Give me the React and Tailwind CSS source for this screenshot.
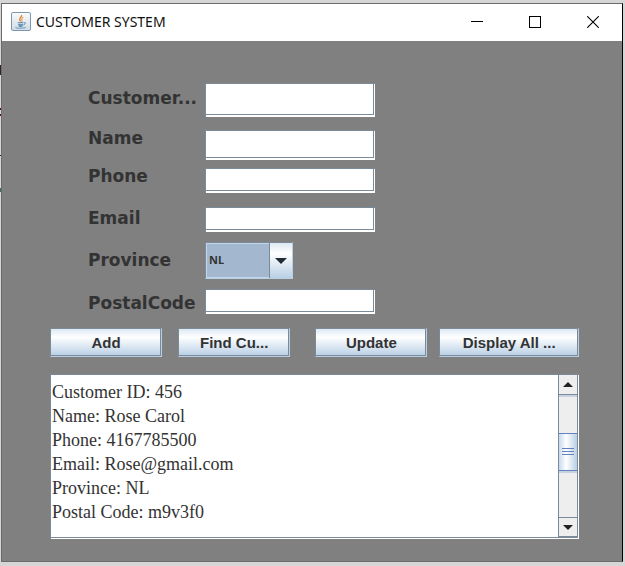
import { useState } from "react";

const LABELS = [
  { id: "customerId", text: "Customer...", space: "" },
  { id: "name", text: "Name", space: "mt-4" },
  { id: "phone", text: "Phone", space: "mt-3.5" },
  { id: "email", text: "Email", space: "mt-4.5" },
  { id: "province", text: "Province", space: "mt-4.5" },
  { id: "postalCode", text: "PostalCode", space: "mt-[19px]" },
];

const ACTIONS = [
  { text: "Add", size: "flex-4" },
  { text: "Find Cu...", size: "flex-4 ml-4" },
  { text: "Update", size: "flex-4 ml-[25px]" },
  { text: "Display All ...", size: "flex-5 ml-3" },
];

const RECORD = [
  "Customer ID: 456",
  "Name: Rose Carol",
  "Phone: 4167785500",
  "Email: Rose@gmail.com",
  "Province: NL",
  "Postal Code: m9v3f0",
].join("\n");

function JavaIcon() {
  return (
    <svg width="20" height="20" viewBox="0 0 20 20" aria-hidden="true">
      <defs>
        <linearGradient id="tile" x1="0" y1="0" x2="0" y2="1">
          <stop offset="0" stopColor="#fbfcfd" />
          <stop offset="1" stopColor="#cfdbe6" />
        </linearGradient>
      </defs>
      <rect x="0.5" y="0.5" width="19" height="18" rx="1.5" fill="url(#tile)" stroke="#7f97ae" />
      <path d="M10.5 3C11.5 4.7 8 5.6 8.8 7.8C9.1 8.6 9.6 9 9.6 9.6" fill="none" stroke="#e58a2c" strokeWidth="1.4" />
      <path d="M12.3 5.2C10.6 6.2 10.1 7 11 8.2C11.4 8.9 11 9.3 10.6 9.8" fill="none" stroke="#eda55c" strokeWidth="1.1" />
      <path d="M6.8 10.7H12.3M7.2 12.4Q9.5 13.4 11.9 12.4M7.7 14Q9.5 14.8 11.6 14" fill="none" stroke="#4d7fa8" strokeWidth="1.1" />
      <path d="M12.8 10.6Q15 10.4 14.2 11.8Q13.7 12.6 12.4 13" fill="none" stroke="#4d7fa8" strokeWidth="0.9" />
      <path d="M5 15Q3.8 16.2 9.5 16.2Q14.5 16.2 15 15" fill="none" stroke="#5f8db2" strokeWidth="0.9" />
    </svg>
  );
}

function TitleBar() {
  const control = "flex h-full w-[58px] items-center justify-center";
  return (
    <header className="flex h-[37px] items-center bg-white pb-px pl-[9px]">
      <JavaIcon />
      <h1 className="ml-[5px] flex-1 font-['Noto_Sans',sans-serif] text-sm leading-5 text-[#111]">
        CUSTOMER SYSTEM
      </h1>
      <button type="button" aria-label="Minimize" className={control}>
        <svg width="12" height="12" viewBox="0 0 12 12" stroke="#000">
          <path d="M0 5.5H12" />
        </svg>
      </button>
      <button type="button" aria-label="Maximize" className={control}>
        <svg width="12" height="12" viewBox="0 0 12 12" fill="none" stroke="#000">
          <rect x="0.5" y="0.5" width="11" height="11" />
        </svg>
      </button>
      <button type="button" aria-label="Close" className={control}>
        <svg width="12" height="12" viewBox="0 0 12 12" stroke="#000" strokeWidth="1.1">
          <path d="M0.2 0.2L11.8 11.8M11.8 0.2L0.2 11.8" />
        </svg>
      </button>
    </header>
  );
}

function Field({ id, className }) {
  return (
    <div className={`border-t border-l border-[#7a8a99] bg-white pr-px pb-0.5 ${className}`}>
      <input
        id={id}
        type="text"
        className="block h-full w-full border-r border-b border-[#7a8a99] bg-white px-1 font-['Liberation_Sans',sans-serif] text-sm text-[#333] outline-none"
      />
    </div>
  );
}

function ProvinceSelect() {
  return (
    <div className="relative mt-2.5 h-[37px] w-[88px] border border-[#7a8a99] border-r-[#b8cfe5] border-b-[#b8cfe5] bg-[#a3b8cf]">
      <select
        id="province"
        defaultValue="NL"
        className="block h-full w-full appearance-none border border-[#c3d5e8] pl-0.5 font-['Noto_Sans',sans-serif] text-[11px] font-bold text-[#333] outline-none"
      >
        <option>NL</option>
        <option>ON</option>
        <option>QC</option>
      </select>
      <span className="pointer-events-none absolute inset-y-0 right-0 flex w-[23px] items-center justify-center border-l border-[#7a8a99] bg-linear-to-b from-[#dde8f3] via-white via-30% to-[#b8cfe5]">
        <svg width="12" height="6" viewBox="0 0 12 6" fill="#222c36">
          <path d="M0 0H12L6 6Z" />
        </svg>
      </span>
    </div>
  );
}

function ScrollBar() {
  const arrow = "flex h-5 items-center justify-center bg-[#eeeeee]";
  return (
    <div className="flex w-5 flex-col border-r border-l border-[#7a8a99] bg-[#eeeeee]">
      <button type="button" aria-label="Scroll up" className={`${arrow} border-b border-[#7a8a99]`}>
        <svg width="10" height="5" viewBox="0 0 10 5" fill="#222">
          <path d="M5 0L10 5H0Z" />
        </svg>
      </button>
      <div className="flex-20 border-t-2 border-[#c6d2de]" />
      <div className="flex h-[38px] flex-col items-center justify-center gap-0.5 border-y border-[#6382bf] bg-linear-to-r from-[#c8d9ee] via-white via-40% to-[#b8cfe5]">
        <span className="h-px w-3 bg-[#6382bf]" />
        <span className="h-px w-3 bg-[#6382bf]" />
        <span className="h-px w-3 bg-[#6382bf]" />
      </div>
      <div className="flex-25 border-t-2 border-[#c6d2de]" />
      <button type="button" aria-label="Scroll down" className={`${arrow} border-y border-[#7a8a99]`}>
        <svg width="10" height="5" viewBox="0 0 10 5" fill="#222">
          <path d="M0 0H10L5 5Z" />
        </svg>
      </button>
    </div>
  );
}

export default function App() {
  const [record, setRecord] = useState(RECORD);
  return (
    <div className="relative flex min-h-screen bg-[#d6d6d6] pt-[3px] pr-0.5 pb-1 pl-px">
      <span className="absolute top-[65px] left-0 h-2.5 w-px bg-[#33222a]" />
      <span className="absolute top-[108px] left-0 h-0.5 w-px bg-[#5a1030]" />
      <span className="absolute top-[114px] left-0 h-0.5 w-px bg-[#5a1030]" />
      <span className="absolute top-[155px] left-0 h-px w-px bg-[#222]" />
      <span className="absolute top-[188px] left-0 h-1 w-px bg-[#3f6f68]" />
      <div className="flex flex-1 flex-col border border-[#6b6b6b] border-r-black">
        <TitleBar />
        <main className="flex-1 bg-[#808080] pt-[42px] pr-[43px] pb-[22px] pl-12">
          <div className="flex pl-[38px]">
            <div className="flex w-[117px] flex-col pt-[3px]">
              {LABELS.map((label) => (
                <label
                  key={label.id}
                  htmlFor={label.id}
                  className={`font-['DejaVu_Sans',sans-serif] text-[17px] leading-6 font-bold text-[#333] ${label.space}`}
                >
                  {label.text}
                </label>
              ))}
            </div>
            <div className="flex w-[170px] flex-col">
              <Field id="customerId" className="h-[34px]" />
              <Field id="name" className="mt-[13px] h-[30px]" />
              <Field id="phone" className="mt-2 h-[25px]" />
              <Field id="email" className="mt-3.5 h-[25px]" />
              <ProvinceSelect />
              <Field id="postalCode" className="mt-2.5 h-[25px]" />
            </div>
          </div>
          <div className="mt-[13px] flex">
            {ACTIONS.map((action) => (
              <button
                key={action.text}
                type="button"
                className={`h-[29px] border border-[#7a8a99] border-r-[#b8cfe5] border-b-[#b8cfe5] bg-linear-to-b from-[#dde8f3] via-white via-30% to-[#b8cfe5] font-['Liberation_Sans',sans-serif] text-[15px] leading-5 font-bold whitespace-nowrap text-[#333] shadow-[inset_-1px_-1px_0_#7a8a99] ${action.size}`}
              >
                {action.text}
              </button>
            ))}
          </div>
          <div className="mt-[17px] border-t border-l border-[#7a8a99] bg-white pr-px pb-px">
            <div className="flex h-[163px] border-b border-[#7a8a99]">
              <textarea
                aria-label="Customer details"
                value={record}
                onChange={(event) => setRecord(event.target.value)}
                className="block flex-1 resize-none overflow-hidden bg-white pt-[5px] pl-px font-['Liberation_Serif',serif] text-lg leading-6 text-[#333] outline-none"
              />
              <ScrollBar />
            </div>
          </div>
        </main>
      </div>
    </div>
  );
}
